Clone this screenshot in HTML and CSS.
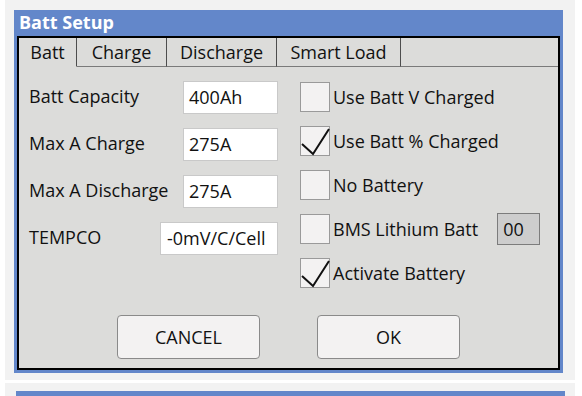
FILE: index.html
```html
<!DOCTYPE html>
<html lang="en">
<head>
<meta charset="UTF-8">
<meta name="viewport" content="width=device-width, initial-scale=1.0">
<title>Batt Setup</title>
<link rel="stylesheet" href="styles.css">
</head>
<body>
<div class="shot">
    <div class="window">
        <div class="title">Batt Setup</div>
        <div class="frame">
            <div class="tabs">
                <div class="tab active tab-batt">Batt</div>
                <div class="tab tab-charge">Charge</div>
                <div class="tab tab-discharge">Discharge</div>
                <div class="tab tab-smart">Smart Load</div>
                <div class="tab-fill"></div>
            </div>
            <div class="panel">
                <div class="form">
                    <div class="fields">
                        <div class="field"><span>Batt Capacity</span><div class="box">400Ah</div></div>
                        <div class="field"><span>Max A Charge</span><div class="box">275A</div></div>
                        <div class="field"><span>Max A Discharge</span><div class="box">275A</div></div>
                        <div class="field"><span>TEMPCO</span><div class="box wide">-0mV/C/Cell</div></div>
                    </div>
                    <div class="checks">
                        <div class="check"><span class="cb"></span><span>Use Batt V Charged</span></div>
                        <div class="check">
                            <span class="cb"><svg viewBox="0 0 30 30"><polyline points="2,18 13,28 29,3"/></svg></span>
                            <span>Use Batt % Charged</span>
                        </div>
                        <div class="check"><span class="cb"></span><span>No Battery</span></div>
                        <div class="check"><span class="cb"></span><span>BMS Lithium Batt</span><div class="num">00</div></div>
                        <div class="check">
                            <span class="cb"><svg viewBox="0 0 30 30"><polyline points="2,18 13,28 29,3"/></svg></span>
                            <span>Activate Battery</span>
                        </div>
                    </div>
                </div>
                <div class="buttons">
                    <button type="button">CANCEL</button>
                    <button type="button">OK</button>
                </div>
            </div>
        </div>
    </div>
</div>
<div class="shot next">
    <div class="window">
        <div class="title"></div>
    </div>
</div>
</body>
</html>
```

FILE: styles.css
```css
body {
    margin: 0;
    background: #fff;
    font-family: "Open Sans", "Noto Sans", sans-serif;
    font-size: 18px;
    color: #111;
}
.shot {
    margin: 0 7px 0 5px;
    background: #f2f2f2;
    padding: 10px 12px 7px 9px;
}
.shot.next { margin-top: 3px; padding-top: 8px; padding-left: 11px; padding-right: 10px; }
.window { background: #6387ca; padding: 0 3px 3px; }
.title {
    height: 26px;
    line-height: 25px;
    padding-left: 2px;
    color: #fff;
    font-weight: bold;
}
.frame { border: 2px solid #000; background: #dcdcda; }

.tabs { display: flex; height: 29px; }
.tab {
    box-sizing: border-box;
    height: 29px;
    line-height: 28px;
    text-align: center;
    border-right: 1px solid #4d4d4d;
    border-bottom: 1px solid #7a7a7a;
}
.tab.active { border-bottom-color: transparent; }
.tab-batt { width: 58px; }
.tab-charge { width: 90px; }
.tab-discharge { width: 110px; }
.tab-smart { width: 124px; }
.tab-fill { flex: 1; border-bottom: 1px solid #7a7a7a; }

.panel {
    box-sizing: border-box;
    height: 301px;
    padding: 14px 0 9px;
    display: flex;
    flex-direction: column;
}
.form { display: flex; padding-left: 10px; }
.fields { width: 249px; display: flex; flex-direction: column; gap: 14px; }
.field { display: flex; justify-content: space-between; align-items: center; height: 33px; }
.field span { margin-top: -3px; }
.box {
    box-sizing: border-box;
    width: 95px;
    height: 33px;
    line-height: 31px;
    padding-left: 5px;
    background: #fff;
    border: 1px solid #c9c9c9;
    white-space: nowrap;
}
.box.wide { width: 118px; padding-left: 6px; }

.checks { margin-left: 22px; padding-top: 1px; display: flex; flex-direction: column; gap: 14px; }
.check { display: flex; align-items: center; height: 30px; white-space: nowrap; }
.cb {
    box-sizing: border-box;
    width: 30px;
    height: 30px;
    margin-right: 3px;
    background: #f3f2f2;
    border: 1px solid #9a9a9a;
    flex: none;
}
.cb svg { width: 30px; height: 30px; margin: -1px; overflow: visible; }
.cb polyline { fill: none; stroke: #111; stroke-width: 2; }
.num {
    box-sizing: border-box;
    width: 43px;
    height: 32px;
    line-height: 30px;
    margin-left: 19px;
    padding-left: 5px;
    background: #cdcdcd;
    border: 1px solid #7c7c7c;
}

.buttons { margin-top: auto; display: flex; justify-content: center; gap: 57px; }
.buttons button {
    width: 143px;
    height: 44px;
    background: #f3f2f2;
    border: 1px solid #8a8a8a;
    border-radius: 4px;
    font-family: inherit;
    font-size: 18px;
    color: #111;
}
```
